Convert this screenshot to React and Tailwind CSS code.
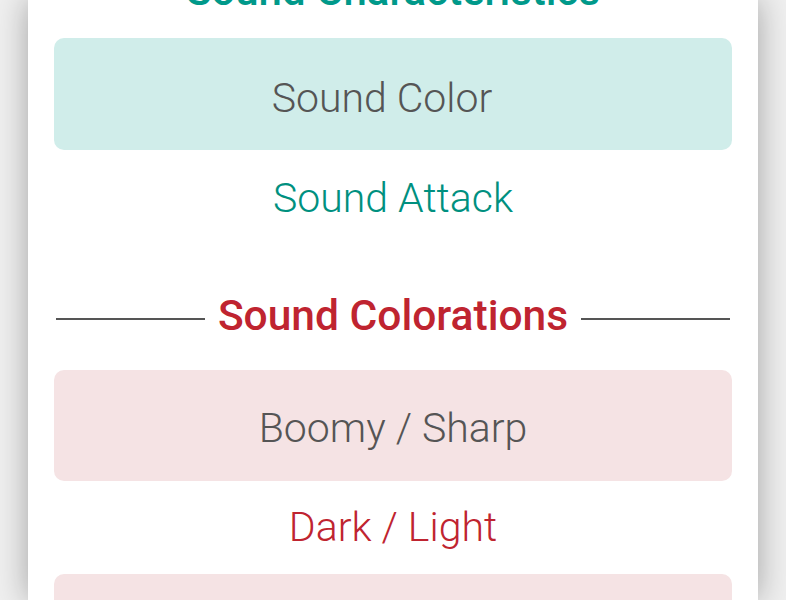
export default function App() {
  return (
    <div className="h-[600px] overflow-hidden bg-[#efefef] px-[28px] font-['Roboto','Liberation_Sans',sans-serif]">
      <div className="flow-root h-full bg-white px-[26px] shadow-[0_0_30px_rgba(0,0,0,0.32)]">
        <h2 className="mt-[-33px] text-center text-[42px] font-medium leading-[48px] text-[#00998a]">
          Sound Characteristics
        </h2>

        <div className="mt-[23px] flex h-[112px] items-center justify-center rounded-[10px] bg-[#d0edea] pr-[22px] pt-[10px] text-[41px] font-light text-[#555]">
          Sound Color
        </div>
        <div className="flex h-[93px] items-center justify-center pt-[4px] text-[41px] font-light text-[#00907f]">
          Sound Attack
        </div>

        <div className="mt-[48px] flex h-[56px] items-center gap-[13px] px-[2px]">
          <div className="h-[2px] flex-1 bg-[#555]" />
          <span className="mt-[3px] self-start text-[42.5px] font-medium leading-[44px] text-[#bf2430]">Sound Colorations</span>
          <div className="h-[2px] flex-1 bg-[#555]" />
        </div>

        <div className="mt-[23px] flex h-[111px] items-center justify-center rounded-[10px] bg-[#f5e3e4] pt-[6px] text-[41px] font-light text-[#555]">
          Boomy / Sharp
        </div>
        <div className="flex h-[93px] items-center justify-center text-[41px] font-light text-[#bf2430]">
          Dark / Light
        </div>
        <div className="h-[112px] rounded-[10px] bg-[#f5e3e4]" />
      </div>
    </div>
  );
}
